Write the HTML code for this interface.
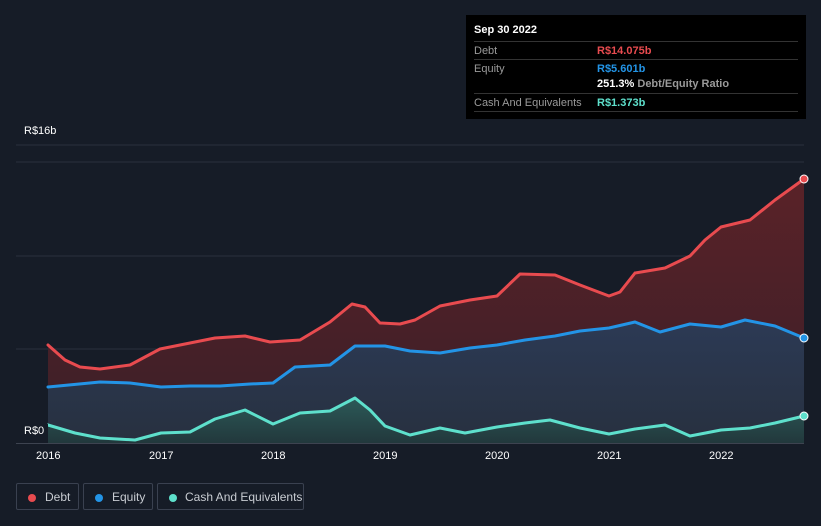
<!DOCTYPE html>
<html><head><style>
body{margin:0;width:821px;height:526px;background:#161c27;font-family:"Liberation Sans",sans-serif;overflow:hidden;position:relative}
.tt{position:absolute;left:466px;top:15px;width:340px;height:104px;background:#000;color:#fff;font-size:11px}
.row{position:absolute;left:8px;width:324px;border-top:1px solid #333;height:18px;line-height:18px;color:#9a9a9a}
.row span{position:absolute;left:123px;font-weight:bold}
.lg{position:absolute;top:483px;height:27px;border:1px solid #3a4150;border-radius:2px;color:#c8ccd2;font-size:12px;line-height:27px;box-sizing:border-box}
.lg i{position:absolute;left:11px;top:10px;width:8px;height:8px;border-radius:50%}
.ax{position:absolute;top:450px;color:#fff;font-size:11px}
</style></head><body>
<svg width="821" height="526" style="position:absolute;left:0;top:0">
<defs>
<linearGradient id="gd" x1="0" y1="0" x2="0" y2="1"><stop offset="0" stop-color="#5a2228"/><stop offset="1" stop-color="#3a1f28"/></linearGradient>
<linearGradient id="ge" x1="0" y1="0" x2="0" y2="1"><stop offset="0" stop-color="#2c3a55"/><stop offset="1" stop-color="#27303f"/></linearGradient>
<linearGradient id="gc" x1="0" y1="0" x2="0" y2="1"><stop offset="0" stop-color="#2c5a58"/><stop offset="1" stop-color="#22383c"/></linearGradient>
</defs>
<line x1="16" y1="145" x2="804" y2="145" stroke="#2a303c"/>
<line x1="16" y1="162" x2="804" y2="162" stroke="#2a303c"/>
<line x1="16" y1="256" x2="804" y2="256" stroke="#2a303c"/>
<line x1="16" y1="349" x2="804" y2="349" stroke="#2a303c"/>
<path d="M48,345 L65,360 80,367 100,369 130,365 160,349 185,344 215,338 245,336 270,342 300,340 330,322 352,304 365,307 380,323 400,324 415,320 440,306 470,300 497,296 520,274 555,275 580,285 609,296 620,292 635,273 665,268 690,256 705,240 721,227 750,220 775,200 804,179 L804,443 L48,443Z" fill="url(#gd)"/>
<path d="M48,387 L100,382 130,383 161,387 190,386 220,386 250,384 273,383 295,367 330,365 355,346 385,346 410,351 440,353 470,348 497,345 525,340 555,336 580,331 609,328 635,322 660,332 690,324 721,327 745,320 775,326 804,338 L804,443 L48,443Z" fill="url(#ge)"/>
<path d="M48,425 L75,433 100,438 135,440 161,433 190,432 215,419 245,410 273,424 300,413 330,411 355,398 370,410 385,426 410,435 440,428 465,433 497,427 525,423 550,420 580,428 609,434 635,429 665,425 690,436 721,430 750,428 775,423 804,416 L804,443 L48,443Z" fill="url(#gc)"/>
<g fill="none" stroke-width="3" stroke-linejoin="round" stroke-linecap="round">
<path d="M48,345 L65,360 80,367 100,369 130,365 160,349 185,344 215,338 245,336 270,342 300,340 330,322 352,304 365,307 380,323 400,324 415,320 440,306 470,300 497,296 520,274 555,275 580,285 609,296 620,292 635,273 665,268 690,256 705,240 721,227 750,220 775,200 804,179" stroke="#e84b4f"/>
<path d="M48,387 L100,382 130,383 161,387 190,386 220,386 250,384 273,383 295,367 330,365 355,346 385,346 410,351 440,353 470,348 497,345 525,340 555,336 580,331 609,328 635,322 660,332 690,324 721,327 745,320 775,326 804,338" stroke="#2394e6"/>
<path d="M48,425 L75,433 100,438 135,440 161,433 190,432 215,419 245,410 273,424 300,413 330,411 355,398 370,410 385,426 410,435 440,428 465,433 497,427 525,423 550,420 580,428 609,434 635,429 665,425 690,436 721,430 750,428 775,423 804,416" stroke="#5ee0cc"/>
</g>
<line x1="16" y1="443.5" x2="804" y2="443.5" stroke="#3d4350"/>
<circle cx="804" cy="179" r="4" fill="#e84b4f" stroke="#fff" stroke-width="1"/>
<circle cx="804" cy="338" r="4" fill="#2394e6" stroke="#fff" stroke-width="1"/>
<circle cx="804" cy="416" r="4" fill="#5ee0cc" stroke="#fff" stroke-width="1"/>
</svg>
<div style="position:absolute;left:24px;top:125px;color:#fff;font-size:11px">R$16b</div>
<div style="position:absolute;left:16px;top:424px;width:32px;height:15px;background:#161c27;color:#fff;font-size:11px;line-height:15px;padding-left:8px;box-sizing:border-box">R$0</div>
<div class="ax" style="left:36px">2016</div><div class="ax" style="left:149px">2017</div><div class="ax" style="left:261px">2018</div><div class="ax" style="left:373px">2019</div><div class="ax" style="left:485px">2020</div><div class="ax" style="left:597px">2021</div><div class="ax" style="left:709px">2022</div>
<div class="tt">
<div style="position:absolute;left:8px;top:9px;font-weight:bold">Sep 30 2022</div>
<div class="row" style="top:26px">Debt<span style="color:#e84b4f">R$14.075b</span></div>
<div class="row" style="top:44px">Equity<span style="color:#2394e6">R$5.601b</span></div>
<div class="row" style="top:60px;border-top:none"><span style="color:#fff">251.3% <b style="color:#9a9a9a">Debt/Equity Ratio</b></span></div>
<div class="row" style="top:78px">Cash And Equivalents<span style="color:#5ee0cc">R$1.373b</span></div>
<div class="row" style="top:96px;height:0"></div>
</div>
<div class="lg" style="left:16px;width:63px"><i style="background:#e84b4f"></i><span style="margin-left:28px">Debt</span></div>
<div class="lg" style="left:83px;width:70px"><i style="background:#2394e6"></i><span style="margin-left:28px">Equity</span></div>
<div class="lg" style="left:157px;width:147px"><i style="background:#5ee0cc"></i><span style="margin-left:27px">Cash And Equivalents</span></div>
</body></html>
